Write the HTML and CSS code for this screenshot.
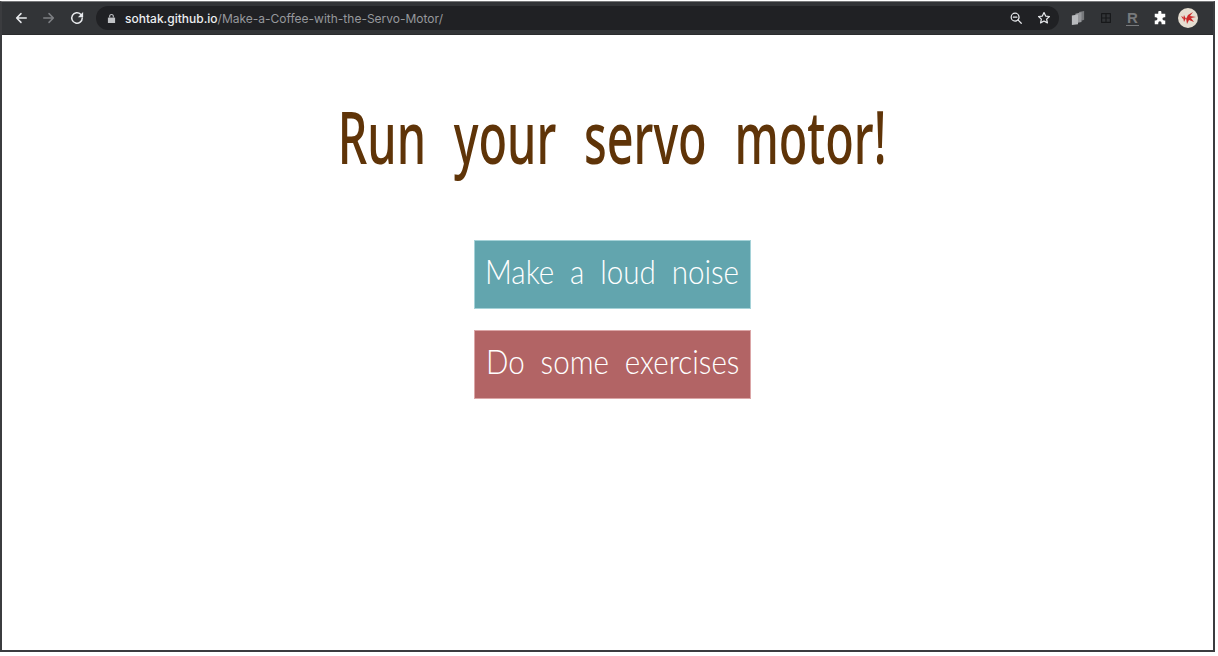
FILE: index.html
```html
<!DOCTYPE html>
<html lang="en">
<head>
<meta charset="utf-8">
<title>Run your servo motor!</title>
<link rel="stylesheet" href="styles.css">
</head>
<body>
<div class="window">
  <header class="toolbar">
    <div class="nav">
      <svg class="icon" viewBox="0 0 16 16"><path class="st light" d="M14 8H3M8 3 3 8l5 5"/></svg>
      <svg class="icon" viewBox="0 0 16 16"><path class="st dim" d="M2 8h11M8 3l5 5-5 5"/></svg>
      <svg class="icon" viewBox="0 0 16 16"><path class="st light" d="M14 8a6 6 0 1 1-1.800-4.300L14 5.500"/><path class="fl" d="M15 1v6H9z"/></svg>
    </div>
    <div class="omnibox">
      <svg class="lock" viewBox="0 0 10 12"><path class="lock-body" d="M1 5h8v6H1z"/><path class="lock-loop" d="M3 5V3.500a2 2 0 0 1 4 0V5"/></svg>
      <span class="url"><span class="host">sohtak.github.io</span><span class="path">/Make-a-Coffee-with-the-Servo-Motor/</span></span>
      <div class="omni-actions">
        <svg class="icon" viewBox="0 0 16 16"><circle class="st light thin" cx="7" cy="7" r="4.500"/><path class="st light thin" d="M10.500 10.500 14 14M5 7h4"/></svg>
        <svg class="icon" viewBox="0 0 16 16"><path class="st light thin" d="m8 1.800 1.900 4 4.300.5-3.200 3 .9 4.300L8 11.500l-3.900 2.100.9-4.300-3.200-3 4.300-.5z"/></svg>
      </div>
    </div>
    <div class="extensions">
      <svg class="icon" viewBox="0 0 16 16"><path class="pages-back" d="M9 1l6-1v10l-3 1z"/><path class="pages-mid" d="M5 3l7-1.500v11L5 14z"/><path class="pages-front" d="M1 5l7-1v11l-7 1z"/></svg>
      <svg class="icon" viewBox="0 0 16 16"><path class="st grid" d="M3 3h10v10H3zM8 3v10M3 8h10"/></svg>
      <span class="r-badge">R</span>
      <svg class="icon" viewBox="0 0 16 16"><path class="fl white" d="M6 1.500a1.800 1.800 0 0 1 3.600 0V3H14v4h-1.300a1.900 1.900 0 0 0 0 3.800H14V15H9.800v-1.300a1.900 1.900 0 0 0-3.800 0V15H2v-4.200h1.200a1.900 1.900 0 0 0 0-3.800H2V3h4z"/></svg>
      <svg class="avatar" viewBox="0 0 20 20"><circle class="avatar-bg" cx="10" cy="10" r="10"/><path class="avatar-mark" d="M3 8l2 1 1 5 2-4 1 6 2-4 5 2-3-4 5-1-6-1 3-4-5 3-2 4-2-4-1 4z"/></svg>
    </div>
  </header>
  <main class="page">
    <h1 class="title">Run your servo motor!</h1>
    <div class="actions">
      <button class="btn btn-teal" type="button"><span class="btn-label">Make a loud noise</span></button>
      <button class="btn btn-red" type="button"><span class="btn-label">Do some exercises</span></button>
    </div>
  </main>
</div>
</body>
</html>
```

FILE: styles.css
```css
* { box-sizing: border-box; }
html, body { margin: 0; height: 100%; background: #fff; overflow: hidden; }
.window {
  width: 1215px;
  height: 651px;
  margin-top: 1px;
  border: 2px solid #3b3c3f;
  border-top: 1px solid #77787a;
  display: flex;
  flex-direction: column;
}
.toolbar {
  height: 33px;
  flex: none;
  background: #323437;
  border-bottom: 1px solid #2a2b2d;
  display: flex;
  align-items: center;
  padding: 0 0 0 12px;
  font-family: "Inter", "Liberation Sans", sans-serif;
}
.icon { width: 14px; height: 14px; flex: none; }
.nav { display: flex; gap: 14px; align-items: center; width: 82px; flex: none; }
.st { fill: none; stroke-width: 1.700; stroke-linecap: round; stroke-linejoin: round; }
.thin { stroke-width: 1.400; }
.light { stroke: #e8eaed; }
.dim { stroke: #7d7f83; }
.fl { fill: #e8eaed; }
.white { fill: #fff; }
.omnibox {
  width: 963px;
  height: 24px;
  border-radius: 12px;
  background: #202124;
  display: flex;
  align-items: center;
  padding: 0 8px 0 11px;
  flex: none;
}
.lock { width: 9px; height: 11px; margin-right: 9px; flex: none; }
.lock-body { fill: #c0c2c5; }
.lock-loop { fill: none; stroke: #c0c2c5; stroke-width: 1.200; }
.url { font-size: 12px; white-space: nowrap; flex: 1; }
.host { color: #eceef0; font-weight: 500; }
.path { color: #96989c; }
.omni-actions { display: flex; gap: 14px; align-items: center; }
.extensions { display: flex; align-items: center; gap: 13.500px; margin-left: 12px; }
.pages-back { fill: #77797c; }
.pages-mid { fill: #96989b; }
.pages-front { fill: #b8babd; }
.grid { stroke: #17181a; stroke-width: 1.300; }
.r-badge {
  width: 13px;
  font-family: "Liberation Sans", sans-serif;
  font-weight: 700;
  font-size: 15px;
  line-height: 15px;
  text-align: center;
  color: #77797c;
  border-bottom: 1px solid #77797c;
}
.avatar { width: 20px; height: 20px; flex: none; margin-left: -2px; }
.avatar-bg { fill: #e5ddd0; }
.avatar-mark { fill: #cc2a2a; }
.page {
  flex: 1;
  background: #fff;
  padding-left: 10px;
  display: flex;
  flex-direction: column;
  align-items: center;
}
.title {
  margin: 54px 0 0;
  height: 151px;
  line-height: 95px;
  color: #5f3408;
  font-family: "Noto Sans", sans-serif;
  font-size: 72px;
  font-weight: 500;
  word-spacing: 24px;
  white-space: nowrap;
  transform: scaleX(.65);
}
.actions { display: flex; flex-direction: column; gap: 21px; }
.btn {
  width: 277px;
  height: 69px;
  border: 1px solid;
  padding: 0 0 8px;
  color: #fff;
  font-family: "Lato", sans-serif;
  font-weight: 300;
  font-size: 34px;
  display: flex;
  align-items: center;
  justify-content: center;
  overflow: hidden;
}
.btn-label { display: block; white-space: nowrap; word-spacing: 9px; transform: scaleX(.87); }
.btn-teal { background: #62a5ae; border-color: #a5d2d8; }
.btn-red { background: #b26465; border-color: #dba6a7; }
```
